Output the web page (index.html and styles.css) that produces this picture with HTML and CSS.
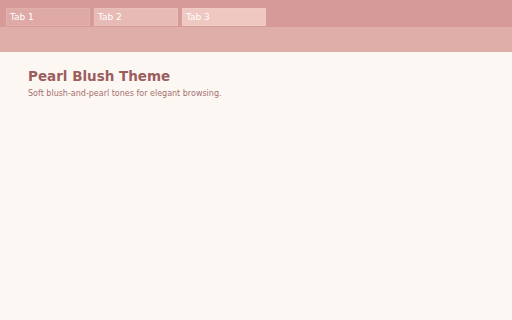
FILE: index.html
```html
<!DOCTYPE html>
<html lang="en">
<head>
    <meta charset="UTF-8">
    <title>Pearl Blush Theme</title>
    <link rel="stylesheet" href="styles.css">
</head>
<body>

<div class="tab-strip">
    <div class="tab tab-1">Tab 1</div>
    <div class="tab tab-2">Tab 2</div>
    <div class="tab tab-3">Tab 3</div>
</div>
<div class="toolbar"></div>

<div class="content">
    <h1>Pearl Blush Theme</h1>
    <p>Soft blush-and-pearl tones for elegant browsing.</p>
</div>

</body>
</html>
```

FILE: styles.css
```css
body {
    margin: 0;
    font-family: 'DejaVu Sans', sans-serif;
    background-color: #fdf7f4;
    height: 100vh;
}
.tab-strip {
    display: flex;
    gap: 4px;
    padding: 8px 6px 1px 6px;
    background-color: #d69b98;
}
.tab {
    width: 84px;
    height: 18px;
    box-sizing: border-box;
    padding: 3px 3px 0 3px;
    font-size: 9px;
    color: #ffffff;
    border: 1px solid rgba(255, 255, 255, 0.08);
}
.tab-1 {
    background-color: #dfaaa6;
}
.tab-2 {
    background-color: #e8bab5;
}
.tab-3 {
    background-color: #efc8c2;
}
.toolbar {
    height: 25px;
    background-color: #e0aea9;
}
.content {
    padding: 16px 28px;
}
h1 {
    margin: 0 0 5px 0;
    font-size: 13.5px;
    color: #9b5e5c;
}
p {
    margin: 0;
    font-size: 8px;
    color: #a4706d;
}
```
